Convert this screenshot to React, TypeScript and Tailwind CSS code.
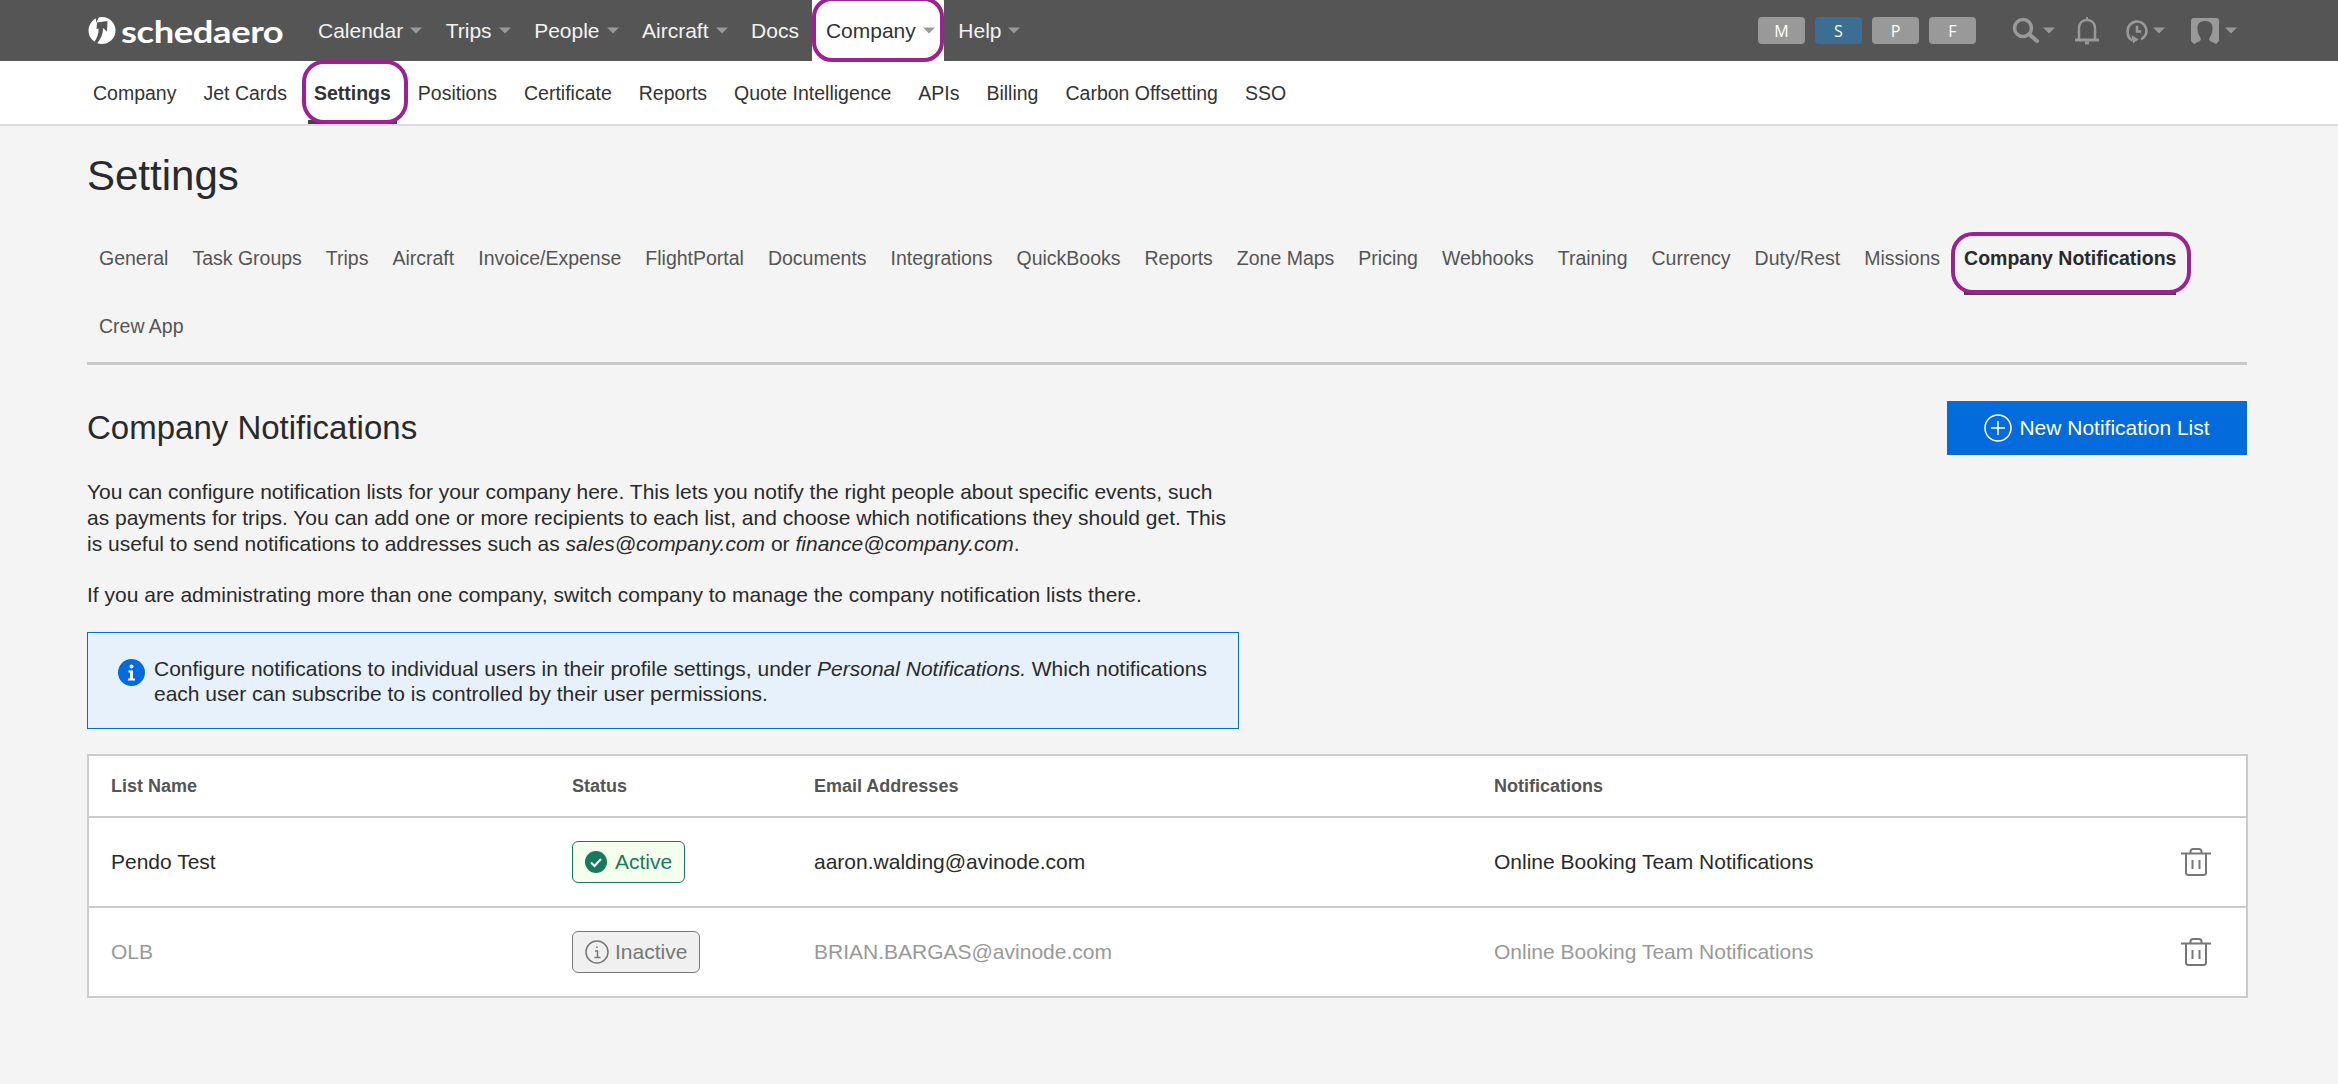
const topItems = [
  { label: "Calendar", caret: true },
  { label: "Trips", caret: true },
  { label: "People", caret: true },
  { label: "Aircraft", caret: true },
  { label: "Docs", caret: false },
  { label: "Company", caret: true, active: true },
  { label: "Help", caret: true },
];

const subItems = ["Company", "Jet Cards", "Settings", "Positions", "Certificate", "Reports", "Quote Intelligence", "APIs", "Billing", "Carbon Offsetting", "SSO"];

const tabs = ["General", "Task Groups", "Trips", "Aircraft", "Invoice/Expense", "FlightPortal", "Documents", "Integrations", "QuickBooks", "Reports", "Zone Maps", "Pricing", "Webhooks", "Training", "Currency", "Duty/Rest", "Missions", "Company Notifications", "Crew App"];

function Caret({ className = "ml-[7px]" }: { className?: string }) {
  return (
    <svg width="12" height="7" viewBox="0 0 12 7" className={`shrink-0 ${className}`}>
      <path d="M0 0.5h12L6 6.5z" fill="#999999" />
    </svg>
  );
}

function Logo() {
  return (
    <div className="flex items-center">
      <svg width="30" height="27" viewBox="0 0 30 27" className="shrink-0">
        <circle cx="15" cy="13.500" r="13.500" fill="#fff" />
        <path d="M10 5.500l10.500-1.500-.5 10.500-4-3.500c.3 5.500-2 11-6.500 16H6c4-5.500 6-10.500 5.500-15.500L9.500 12z" fill="#555555" />
        <path d="M9 6l3-6h-3z" fill="#555555" />
      </svg>
      <span className="ml-[4px] w-[160px] origin-left scale-x-[1.21] font-['Lato',sans-serif] text-[30px] leading-[36px] font-bold tracking-[-0.3px] whitespace-nowrap text-white">schedaero</span>
    </div>
  );
}

function TrashIcon() {
  return (
    <svg width="30" height="28" viewBox="0 0 30 28" fill="none" stroke="#777777" strokeWidth="2">
      <path d="M0 5.500h30" />
      <path d="M9.500 5V3.500c0-1.500 1-2.500 2.500-2.500h6c1.500 0 2.500 1 2.500 2.500V5" />
      <path d="M5 6v18.500c0 1.500 1 2.500 2.500 2.500h15c1.500 0 2.500-1 2.500-2.500V6" />
      <path d="M11.500 12v9M18.500 12v9" />
    </svg>
  );
}

export default function App() {
  return (
    <div className="min-h-[1084px] bg-[#f4f4f4] font-['Liberation_Sans',Arial,sans-serif] text-[21px] text-[#2a2a2a]">
      <header className="flex h-[61px] items-center bg-[#555555] pl-[87px]">
        <Logo />
        <nav className="ml-[23px] flex h-full items-center">
          {topItems.map((item) => (
            <div
              key={item.label}
              className={`relative flex h-full items-center pl-[14px] ${item.caret ? "pr-[9.5px]" : "pr-[13px]"} ${item.active ? "bg-white text-[#333333]" : "text-[#f2f2f2]"}`}
            >
              {item.label}
              {item.caret && <Caret />}
              {item.active && <span className="absolute -top-[3px] right-0 -bottom-[1px] left-0 rounded-[20px] border-[4.5px] border-[#9b2290]" />}
            </div>
          ))}
        </nav>
        <div className="ml-auto flex items-center pr-[101px]">
          <div className="flex gap-[10px] font-['Open_Sans',sans-serif] text-[16px] text-white">
            {["M", "S", "P", "F"].map((m) => (
              <span key={m} className={`flex h-[27px] w-[47px] items-center justify-center rounded-[4px] ${m === "S" ? "bg-[#3c6e94]" : "bg-[#999999]"}`}>{m}</span>
            ))}
          </div>
          <svg width="27" height="27" viewBox="0 0 27 27" fill="none" stroke="#999999" className="ml-[36px]">
            <circle cx="11" cy="11" r="8.500" strokeWidth="3.500" />
            <path d="M18 18l7 6" strokeWidth="4" strokeLinecap="round" />
          </svg>
          <Caret className="ml-[4px]" />
          <svg width="24" height="28" viewBox="0 0 24 28" fill="none" stroke="#999999" strokeWidth="2.500" className="ml-[20px]">
            <path d="M4 22V11.500C4 6.500 7 3 12 3s8 3.500 8 8.500V22" />
            <path d="M0 23h24" strokeWidth="3" />
            <path d="M10 26h4" strokeWidth="3" />
            <path d="M12 0v3" strokeWidth="2" />
          </svg>
          <svg width="22" height="26" viewBox="0 0 21 24" fill="none" stroke="#999999" className="ml-[27px]">
            <path d="M6 21C3 19.500 1.500 16 1.500 12a9 9 0 1 1 13 8" strokeWidth="2.500" />
            <path d="M10.500 7v5.500h4" strokeWidth="2.500" />
            <path d="M6 17l1 6 4-3z" fill="#999999" strokeWidth="1" />
          </svg>
          <Caret className="ml-[5px]" />
          <svg width="28" height="26" viewBox="0 0 28 26" className="ml-[26px]">
            <path d="M3 0h22a3 3 0 0 1 3 3v20l-3 3-6-3c-1-1-1-3 0-4 2-3 2.500-6 2.500-9C21.500 5 18.500 3 14 3S6.500 5 6.500 10c0 3 .5 6 2.500 9 1 1 1 3 0 4l-6 3-3-3V3a3 3 0 0 1 3-3z" fill="#999999" />
          </svg>
          <Caret className="ml-[6px]" />
        </div>
      </header>

      <nav className="flex h-[65px] items-start border-b-[2px] border-[#dddddd] bg-white pl-[79.5px] text-[19.5px] text-[#333333]">
        {subItems.map((s) => (
          <div key={s} className={`relative flex h-[63px] items-center px-[13.5px] pt-[2px] ${s === "Settings" ? "font-bold" : ""}`}>
            {s}
            {s === "Settings" && (
              <>
                <span className="absolute right-[7.5px] bottom-0 left-[7.5px] h-[4px] bg-[#444444]" />
                <span className="absolute -top-[1px] -right-[3.5px] bottom-0 left-[1.5px] rounded-[22px] border-[4.5px] border-[#9b2290]" />
              </>
            )}
          </div>
        ))}
      </nav>

      <main className="pr-[91px] pl-[87px]">
        <h1 className="pt-[25px] text-[42px] leading-[50px]">Settings</h1>

        <div className="mt-[25px] flex flex-wrap border-b-[3px] border-[#c8c8c8] text-[19.5px] text-[#555555]">
          {tabs.map((t) => (
            <div key={t} className={`relative h-[68px] px-[12px] pt-[20px] leading-[24px] ${t === "Company Notifications" ? "font-bold text-[#2a2a2a]" : ""}`}>
              {t}
              {t === "Company Notifications" && (
                <>
                  <span className="absolute right-[12px] -bottom-[1px] left-[12px] h-[4px] bg-[#444444]" />
                  <span className="absolute top-[6px] right-[-3px] bottom-0 left-[-1px] rounded-[22px] border-[4.5px] border-[#9b2290]" />
                </>
              )}
            </div>
          ))}
        </div>

        <div className="mt-[36px] flex h-[54px] items-center justify-between">
          <h2 className="text-[33px]">Company Notifications</h2>
          <button type="button" className="flex h-[54px] w-[300px] items-center justify-center bg-[#046bdc] text-white">
            <svg width="28" height="28" viewBox="0 0 28 28" fill="none" stroke="#fff" strokeWidth="1.500" className="mr-[7px]">
              <circle cx="14" cy="14" r="13" />
              <path d="M14 7v14M7 14h14" />
            </svg>
            New Notification List
          </button>
        </div>

        <div className="mt-[24px] w-[1145px] leading-[26px]">
          <p>
            You can configure notification lists for your company here. This lets you notify the right people about specific events, such as payments for trips. You can add one or more recipients to each list, and choose which notifications they should get. This is useful to send notifications to addresses such as <em>sales@company.com</em> or <em>finance@company.com</em>.
          </p>
          <p className="mt-[24.5px]">If you are administrating more than one company, switch company to manage the company notification lists there.</p>
        </div>

        <div className="mt-[24.5px] flex h-[97px] w-[1152px] items-start border-[1.5px] border-[#046bdc] bg-[#e6f1fc] pt-[24px] pr-[28px] pl-[30px] leading-[24.5px]">
          <svg width="27" height="27" viewBox="0 0 27 27" className="mt-[2px] mr-[9px] shrink-0">
            <circle cx="13.500" cy="13.500" r="13.500" fill="#046bdc" />
            <circle cx="13.500" cy="7.500" r="2" fill="#fff" />
            <path d="M10.500 11.500h4.500v8h2v2h-7v-2h2v-6h-1.500z" fill="#fff" />
          </svg>
          <p>
            Configure notifications to individual users in their profile settings, under <em>Personal Notifications.</em> Which notifications each user can subscribe to is controlled by their user permissions.
          </p>
        </div>

        <div className="mt-[25px] w-[2161px] border-2 border-[#cccccc] bg-white">
          <div className="grid h-[62px] grid-cols-[461px_242px_680px_1fr] items-center border-b-2 border-[#cccccc] pl-[22px] text-[18px] font-bold text-[#555555]">
            <div>List Name</div>
            <div>Status</div>
            <div>Email Addresses</div>
            <div>Notifications</div>
          </div>
          <div className="grid h-[90px] grid-cols-[461px_242px_680px_1fr] items-center border-b-2 border-[#cccccc] pb-[1px] pl-[22px]">
            <div>Pendo Test</div>
            <div>
              <span className="inline-flex h-[42px] w-[113px] items-center rounded-[6px] border-[1.5px] border-[#177a5d] bg-[#f5ffee] pl-[12px] text-[#177a5d]">
                <svg width="22" height="22" viewBox="0 0 22 22" className="mr-[8px] shrink-0">
                  <circle cx="11" cy="11" r="11" fill="#177a5d" />
                  <path d="M6 11.500l3.500 3.500L16 8" fill="none" stroke="#fff" strokeWidth="2" />
                </svg>
                Active
              </span>
            </div>
            <div>aaron.walding@avinode.com</div>
            <div className="flex items-center justify-between pr-[35px]">
              <span>Online Booking Team Notifications</span>
              <TrashIcon />
            </div>
          </div>
          <div className="grid h-[88px] grid-cols-[461px_242px_680px_1fr] items-center pb-[1px] pl-[22px] text-[#999999]">
            <div>OLB</div>
            <div>
              <span className="inline-flex h-[42px] w-[128px] items-center rounded-[6px] border-[1.5px] border-[#777777] bg-[#f0f0f0] pl-[12px] text-[#777777]">
                <svg width="24" height="24" viewBox="0 0 24 24" fill="none" stroke="#777777" strokeWidth="1.500" className="mr-[6px] shrink-0">
                  <circle cx="12" cy="12" r="11" />
                  <path d="M10 11h2.500v6.500M9.500 17.500h6M12 6.500v1.500" />
                </svg>
                Inactive
              </span>
            </div>
            <div>BRIAN.BARGAS@avinode.com</div>
            <div className="flex items-center justify-between pr-[35px]">
              <span>Online Booking Team Notifications</span>
              <TrashIcon />
            </div>
          </div>
        </div>
      </main>
    </div>
  );
}
